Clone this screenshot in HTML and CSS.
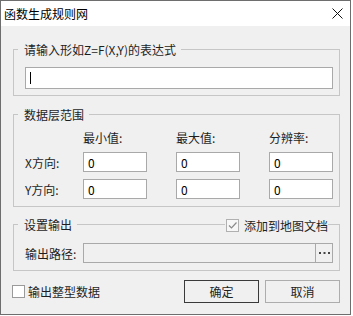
FILE: index.html
```html
<!DOCTYPE html>
<html lang="zh-CN">
<head>
<meta charset="utf-8">
<title>函数生成规则网</title>
<link rel="stylesheet" href="styles.css">
</head>
<body>
<div class="window">
  <div class="titlebar">
    <span class="title">函数生成规则网</span>
    <svg class="close" width="11" height="11" viewBox="0 0 11 11"><path d="M0.5 0.5L10.5 10.5M10.5 0.5L0.5 10.5" stroke="#111" stroke-width="1" fill="none"/></svg>
  </div>
  <div class="content">
    <fieldset class="group g1">
      <legend>请输入形如Z=F(X,Y)的表达式</legend>
      <div class="field expr"><span class="caret"></span></div>
    </fieldset>

    <fieldset class="group g2">
      <legend>数据层范围</legend>
      <div class="range">
        <span class="c1">最小值:</span>
        <span class="c2">最大值:</span>
        <span class="c3">分辨率:</span>
        <span class="rowlabel">X方向:</span>
        <div class="field num c1">0</div>
        <div class="field num c2">0</div>
        <div class="field num c3">0</div>
        <span class="rowlabel">Y方向:</span>
        <div class="field num c1">0</div>
        <div class="field num c2">0</div>
        <div class="field num c3">0</div>
      </div>
    </fieldset>

    <fieldset class="group g3">
      <legend>设置输出</legend>
      <label class="check add">
        <span class="box checked"><svg width="11" height="11" viewBox="0 0 11 11"><path d="M2 5.5L4.5 8L9.5 2.5" stroke="#8a8a8a" stroke-width="1.2" fill="none"/></svg></span>
        <span>添加到地图文档</span>
      </label>
      <div class="pathrow">
        <span class="rowlabel">输出路径:</span>
        <div class="field path">
          <span class="browse"><svg width="11" height="2" viewBox="0 0 11 2"><rect x="0" y="0" width="2" height="2" fill="#444"/><rect x="4.5" y="0" width="2" height="2" fill="#444"/><rect x="9" y="0" width="2" height="2" fill="#444"/></svg></span>
        </div>
      </div>
    </fieldset>

    <div class="footer">
      <label class="check">
        <span class="box"></span>
        <span>输出整型数据</span>
      </label>
      <div class="buttons">
        <button class="btn default">确定</button>
        <button class="btn">取消</button>
      </div>
    </div>
  </div>
</div>
</body>
</html>
```

FILE: styles.css
```css
* { box-sizing: border-box; }
html, body { margin: 0; padding: 0; background: #fff; }
body {
  font-family: "Noto Sans CJK SC", "Noto Sans", sans-serif;
  font-size: 12px;
  line-height: 15px;
  color: #1e1e1e;
}
.window {
  width: 351px;
  height: 315px;
  border: 1px solid #6e6e6e;
  background: #f0f0f0;
  display: flex;
  flex-direction: column;
}
.titlebar {
  height: 25px;
  flex: none;
  background: #fff;
  display: flex;
  align-items: center;
  justify-content: space-between;
  padding: 0 7px 0 3px;
}
.title { color: #000; }
.close { display: block; }
.content {
  flex: 1;
  padding: 16px 0 0 12px;
}
.group {
  margin: 0;
  width: 327px;
  min-width: 0;
  border: 1px solid #c6c6c6;
  padding: 0 6px 6px 11px;
  position: relative;
}
.group legend {
  margin-left: -7px;
  padding: 0 5px 0 6px;
  line-height: 15px;
}
.field {
  background: #fff;
  border: 1px solid #a9a9a9;
  display: flex;
  align-items: center;
  padding-left: 4px;
  color: #000;
}
.expr { height: 22px; margin-top: 10px; }
.caret { width: 1px; height: 12px; background: #000; }
.g2 { margin-top: 11px; padding-bottom: 7px; }
.range {
  margin-top: 8px;
  display: grid;
  grid-template-columns: 58px 64px 29px 64px 29px 64px;
  grid-template-rows: 15px 20px 20px;
  row-gap: 7px;
  align-items: center;
}
.range .rowlabel { grid-column: 1; white-space: nowrap; }
.range .c1 { grid-column: 2; }
.range .c2 { grid-column: 4; }
.range .c3 { grid-column: 6; }
.num { height: 20px; }
.g3 { margin-top: 10px; padding-bottom: 7px; }
.pathrow {
  margin-top: 11px;
  display: flex;
  align-items: center;
}
.pathrow .rowlabel { width: 58px; flex: none; }
.path {
  flex: 1;
  height: 20px;
  background: #f0f0f0;
  justify-content: flex-end;
  padding: 0;
}
.browse {
  width: 17px;
  height: 18px;
  border-left: 1px solid #a9a9a9;
  display: flex;
  align-items: center;
  justify-content: center;
}
.browse svg { display: block; }
.check {
  display: flex;
  align-items: center;
  gap: 3px;
}
.box {
  width: 13px;
  height: 13px;
  border: 1px solid #9a9a9a;
  background: #fff;
  display: flex;
  align-items: center;
  justify-content: center;
}
.box.checked { border-color: #b0b0b0; background: #f7f7f7; }
.box svg { display: block; }
.add {
  position: absolute;
  top: -14px;
  right: 11px;
  background: #f0f0f0;
  padding-left: 1px;
  gap: 5px;
}
.footer {
  margin-top: 9px;
  margin-left: -1px;
  width: 328px;
  display: flex;
  align-items: center;
  justify-content: space-between;
}
.buttons { display: flex; gap: 6px; }
.btn {
  width: 75px;
  height: 23px;
  font: inherit;
  color: #1e1e1e;
  background: #f0f0f0;
  border: 1px solid #adadad;
  padding: 0;
}
.btn.default { border-color: #3a3a3a; }
```
